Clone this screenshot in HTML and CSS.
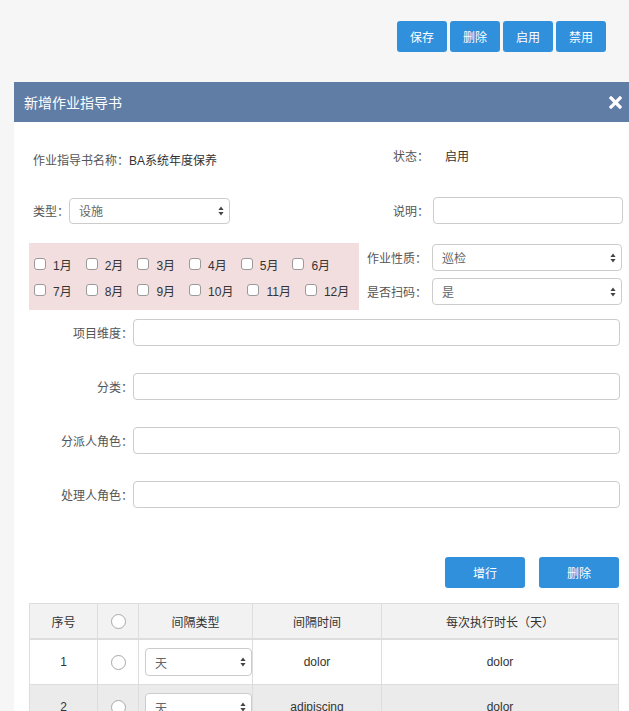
FILE: index.html
```html
<!DOCTYPE html>
<html lang="zh">
<head>
<meta charset="utf-8">
<title>新增作业指导书</title>
<link rel="stylesheet" href="styles.css">
</head>
<body>
<div class="toolbar">
  <button class="btn btn-sm">保存</button>
  <button class="btn btn-sm">删除</button>
  <button class="btn btn-sm">启用</button>
  <button class="btn btn-sm">禁用</button>
</div>

<div class="modal">
  <div class="modal-header">
    <span class="modal-title">新增作业指导书</span>
    <svg class="close" width="13" height="13" viewBox="0 0 13 13"><path d="M2 2 L11 11 M11 2 L2 11" stroke="#fff" stroke-width="3.2" stroke-linecap="square"/></svg>
  </div>
  <div class="modal-body">
    <div class="top-grid">
      <div class="name-cell"><span class="lbl">作业指导书名称：</span><span class="val">BA系统年度保养</span></div>
      <div class="state-cell"><span class="rlabel">状态：</span><span class="val state-val">启用</span></div>

      <div class="type-cell"><span class="lbl">类型：</span>
        <div class="select type-select"><span>设施</span><svg width="6" height="10" viewBox="0 0 6 10"><path d="M3 0.5 L5.6 4 L0.4 4Z M3 9.5 L5.6 6 L0.4 6Z" fill="#444"/></svg></div>
      </div>
      <div class="rrow desc-cell"><span class="rlabel">说明：</span><div class="input"></div></div>

      <div class="months">
        <div class="mrow">
          <label class="mitem"><span class="cb"></span>1月</label>
          <label class="mitem"><span class="cb"></span>2月</label>
          <label class="mitem"><span class="cb"></span>3月</label>
          <label class="mitem"><span class="cb"></span>4月</label>
          <label class="mitem"><span class="cb"></span>5月</label>
          <label class="mitem"><span class="cb"></span>6月</label>
        </div>
        <div class="mrow">
          <label class="mitem"><span class="cb"></span>7月</label>
          <label class="mitem"><span class="cb"></span>8月</label>
          <label class="mitem"><span class="cb"></span>9月</label>
          <label class="mitem"><span class="cb"></span>10月</label>
          <label class="mitem"><span class="cb"></span>11月</label>
          <label class="mitem"><span class="cb"></span>12月</label>
        </div>
      </div>
      <div class="right-stack">
        <div class="rrow"><span class="rlabel">作业性质：</span>
          <div class="select"><span>巡检</span><svg width="6" height="10" viewBox="0 0 6 10"><path d="M3 0.5 L5.6 4 L0.4 4Z M3 9.5 L5.6 6 L0.4 6Z" fill="#444"/></svg></div>
        </div>
        <div class="rrow"><span class="rlabel">是否扫码：</span>
          <div class="select"><span>是</span><svg width="6" height="10" viewBox="0 0 6 10"><path d="M3 0.5 L5.6 4 L0.4 4Z M3 9.5 L5.6 6 L0.4 6Z" fill="#444"/></svg></div>
        </div>
      </div>
    </div>

    <div class="full-rows">
      <div class="frow"><span class="flabel">项目维度：</span><div class="input"></div></div>
      <div class="frow"><span class="flabel">分类：</span><div class="input"></div></div>
      <div class="frow"><span class="flabel">分派人角色：</span><div class="input"></div></div>
      <div class="frow"><span class="flabel">处理人角色：</span><div class="input"></div></div>
    </div>

    <div class="actions">
      <button class="btn btn-lg">增行</button>
      <button class="btn btn-lg">删除</button>
    </div>

    <table class="grid">
      <colgroup>
        <col class="c1"><col class="c2"><col class="c3"><col class="c4"><col class="c5">
      </colgroup>
      <thead>
        <tr><th>序号</th><th><span class="radio"></span></th><th>间隔类型</th><th>间隔时间</th><th>每次执行时长（天）</th></tr>
      </thead>
      <tbody>
        <tr>
          <td>1</td><td><span class="radio"></span></td>
          <td class="sel-cell"><div class="select tsel"><span>天</span><svg width="6" height="10" viewBox="0 0 6 10"><path d="M3 0.5 L5.6 4 L0.4 4Z M3 9.5 L5.6 6 L0.4 6Z" fill="#444"/></svg></div></td>
          <td>dolor</td><td>dolor</td>
        </tr>
        <tr class="alt">
          <td>2</td><td><span class="radio"></span></td>
          <td class="sel-cell"><div class="select tsel"><span>天</span><svg width="6" height="10" viewBox="0 0 6 10"><path d="M3 0.5 L5.6 4 L0.4 4Z M3 9.5 L5.6 6 L0.4 6Z" fill="#444"/></svg></div></td>
          <td>adipiscing</td><td>dolor</td>
        </tr>
      </tbody>
    </table>
  </div>
</div>
</body>
</html>
```

FILE: styles.css
```css
html, body {
  margin: 0;
  padding: 0;
  background: #f6f6f6;
  overflow: hidden;
  font-family: "Liberation Sans", "Noto Sans CJK SC", sans-serif;
  font-size: 12px;
  color: #333;
}

.toolbar {
  display: flex;
  justify-content: flex-end;
  gap: 3px;
  padding: 21px 23px 0 0;
  height: 31px;
}

.btn {
  background: #3190dc;
  color: #fff;
  border: none;
  border-radius: 3px;
  font-family: inherit;
  font-size: 12px;
  padding: 0;
  cursor: pointer;
}
.btn-sm { width: 50px; height: 31px; }
.btn-lg { width: 80px; height: 31px; }

.modal {
  margin: 30px 0 0 14px;
  background: #fff;
  height: 700px;
}

.modal-header {
  height: 40px;
  background: #607da6;
  display: flex;
  align-items: center;
  justify-content: space-between;
  padding: 0 7px 0 10px;
}
.modal-title {
  color: #fff;
  font-size: 14px;
}
.close { display: block; }

.modal-body {
  padding: 28px 6px 0 15px;
}

.top-grid {
  display: grid;
  grid-template-columns: 330px 1fr;
  row-gap: 0;
}

.lbl { color: #555; }
.val { color: #333; }

.name-cell {
  padding-left: 4px;
  height: 22px;
  line-height: 22px;
}
.state-cell {
  height: 22px;
  line-height: 14px;
  display: flex;
}
.state-val { margin-left: 16px; }

.rlabel {
  width: 70px;
  text-align: right;
  color: #555;
  flex: none;
}

.rrow {
  display: flex;
  align-items: center;
  height: 27px;
}
.rrow .input, .rrow .select {
  margin-left: 4px;
  flex: 1;
}

.type-cell {
  margin-top: 25px;
  padding-left: 4px;
  display: flex;
  align-items: center;
  height: 27px;
}
.desc-cell { margin-top: 25px; }

.input {
  height: 25px;
  border: 1px solid #ccc;
  border-radius: 4px;
  background: #fff;
  box-sizing: content-box;
}
.rrow .input { height: 25px; }

.select {
  height: 25px;
  border: 1px solid #ccc;
  border-radius: 4px;
  background: #fff;
  display: flex;
  align-items: center;
  justify-content: space-between;
  padding: 0 5px 0 9px;
  color: #666;
}
.select svg { flex: none; }
.type-select {
  width: 145px;
  height: 24px;
}

.months {
  margin-top: 19px;
  background: #f2dede;
  padding: 8px 0 7px 5px;
  height: 52px;
}
.mrow {
  display: flex;
  align-items: center;
  height: 26px;
  gap: 14px;
}
.mitem {
  display: flex;
  align-items: center;
  gap: 7px;
  color: #333;
  white-space: nowrap;
}
.cb {
  width: 10px;
  height: 10px;
  border: 1px solid #9a9a9a;
  border-radius: 3px;
  background: #fff;
  display: inline-block;
}

.right-stack {
  margin-top: 20px;
  display: flex;
  flex-direction: column;
  gap: 7px;
}
.right-stack .select { margin-left: 5px; margin-right: 1px; }
.right-stack .rlabel { width: 68px; }

.full-rows {
  margin-top: 9px;
  display: flex;
  flex-direction: column;
  gap: 27px;
}
.frow {
  display: flex;
  align-items: center;
  height: 27px;
  padding-right: 3px;
}
.flabel {
  width: 104px;
  text-align: right;
  color: #555;
  flex: none;
}
.frow .input { flex: 1; }

.actions {
  margin-top: 49px;
  display: flex;
  justify-content: flex-end;
  gap: 14px;
  padding-right: 4px;
}

.grid {
  margin-top: 15px;
  width: 589px;
  border-collapse: collapse;
  table-layout: fixed;
  color: #333;
}
.c1 { width: 68px; }
.c2 { width: 41px; }
.c3 { width: 114px; }
.c4 { width: 129px; }
.c5 { width: 237px; }

.grid th, .grid td {
  border: 1px solid #ddd;
  text-align: center;
  font-weight: normal;
  vertical-align: middle;
}
.grid th {
  background: #f2f2f2;
  height: 34px;
  padding: 0 4px;
  border-bottom: 2px solid #ddd;
}
.grid td {
  height: 44px;
  padding: 0 4px;
}
.grid td.sel-cell {
  padding: 0 0 0 6px;
  text-align: left;
}
.grid tr.alt td { background: #ebebeb; }

.tsel {
  height: 26px;
  width: 91px;
  border-radius: 4px;
}

.radio {
  display: inline-block;
  width: 13px;
  height: 13px;
  border: 1px solid #a8a8a8;
  border-radius: 50%;
  background: #fff;
  vertical-align: middle;
}
```
